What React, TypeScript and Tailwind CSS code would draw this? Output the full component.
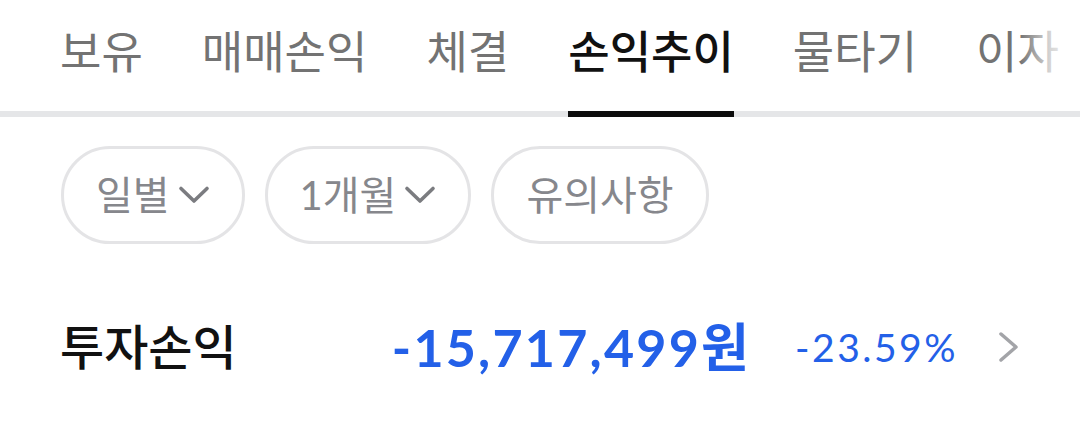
import React from 'react';

const tabs = ['보유', '매매손익', '체결', '손익추이', '물타기', '이자'];
const activeTab = '손익추이';

function DownCaret() {
  return (
    <svg width="32" height="20" viewBox="0 0 32 20" fill="none" className="text-[#7b7c80]">
      <path d="M3 3.5 L16 16 L29 3.5" stroke="currentColor" strokeWidth="3.6" strokeLinecap="round" strokeLinejoin="round" />
    </svg>
  );
}

function FilterPill({ label, dropdown }: { label: string; dropdown?: boolean }) {
  return (
    <button
      className={`flex h-[98px] items-center gap-[8px] rounded-full border-[3px] border-[#e4e4e6] text-[40px] text-[#86878c] ${
        dropdown ? 'pl-[32px] pr-[32px]' : 'px-[32px]'
      }`}
    >
      <span>{label}</span>
      {dropdown && <DownCaret />}
    </button>
  );
}

export default function App() {
  return (
    <div className="h-[446px] w-[1080px] overflow-hidden bg-white font-['Lato','Noto_Sans_CJK_KR',sans-serif]">
      {/* Tab bar */}
      <div className="relative border-b-[6px] border-[#e5e6e8]">
        <div className="flex gap-[59px] whitespace-nowrap pl-[60px] pt-[20px]">
          {tabs.map((t) => {
            const active = t === activeTab;
            return (
              <div key={t} className="relative flex shrink-0 flex-col">
                <span
                  className={`h-[91px] text-[45px] leading-[64px] ${
                    active ? 'font-medium text-[#111111]' : 'text-[#737373]'
                  }`}
                >
                  {t}
                </span>
                {active && <span className="absolute -bottom-[6px] left-0 right-0 h-[6px] bg-[#0c0c0c]" />}
              </div>
            );
          })}
        </div>
        <div className="pointer-events-none absolute right-0 top-0 h-full w-[60px] bg-gradient-to-r from-white/0 via-white/70 to-white" />
      </div>

      {/* Filters */}
      <div className="flex gap-[20px] pl-[61px] pt-[29px]">
        <FilterPill label="일별" dropdown />
        <FilterPill label="1개월" dropdown />
        <FilterPill label="유의사항" />
      </div>

      {/* Summary row */}
      <div className="mt-[73px] flex h-[60px] items-center pl-[60px] pr-[60px]">
        <span className="text-[48px] font-medium text-[#111111]">투자손익</span>
        <div className="ml-auto flex items-center">
          <span className="text-[52px] font-bold tracking-[2.2px] text-[#2360e8]">-15,717,499원</span>
          <span className="ml-[44px] text-[39px] tracking-[2.5px] text-[#2360e8]">-23.59%</span>
          <svg width="22" height="32" viewBox="0 0 22 32" fill="none" className="ml-[40px] text-[#a3a4a8]">
            <path d="M3 3 L18 16 L3 29" stroke="currentColor" strokeWidth="3.5" strokeLinecap="round" strokeLinejoin="round" />
          </svg>
        </div>
      </div>
    </div>
  );
}
